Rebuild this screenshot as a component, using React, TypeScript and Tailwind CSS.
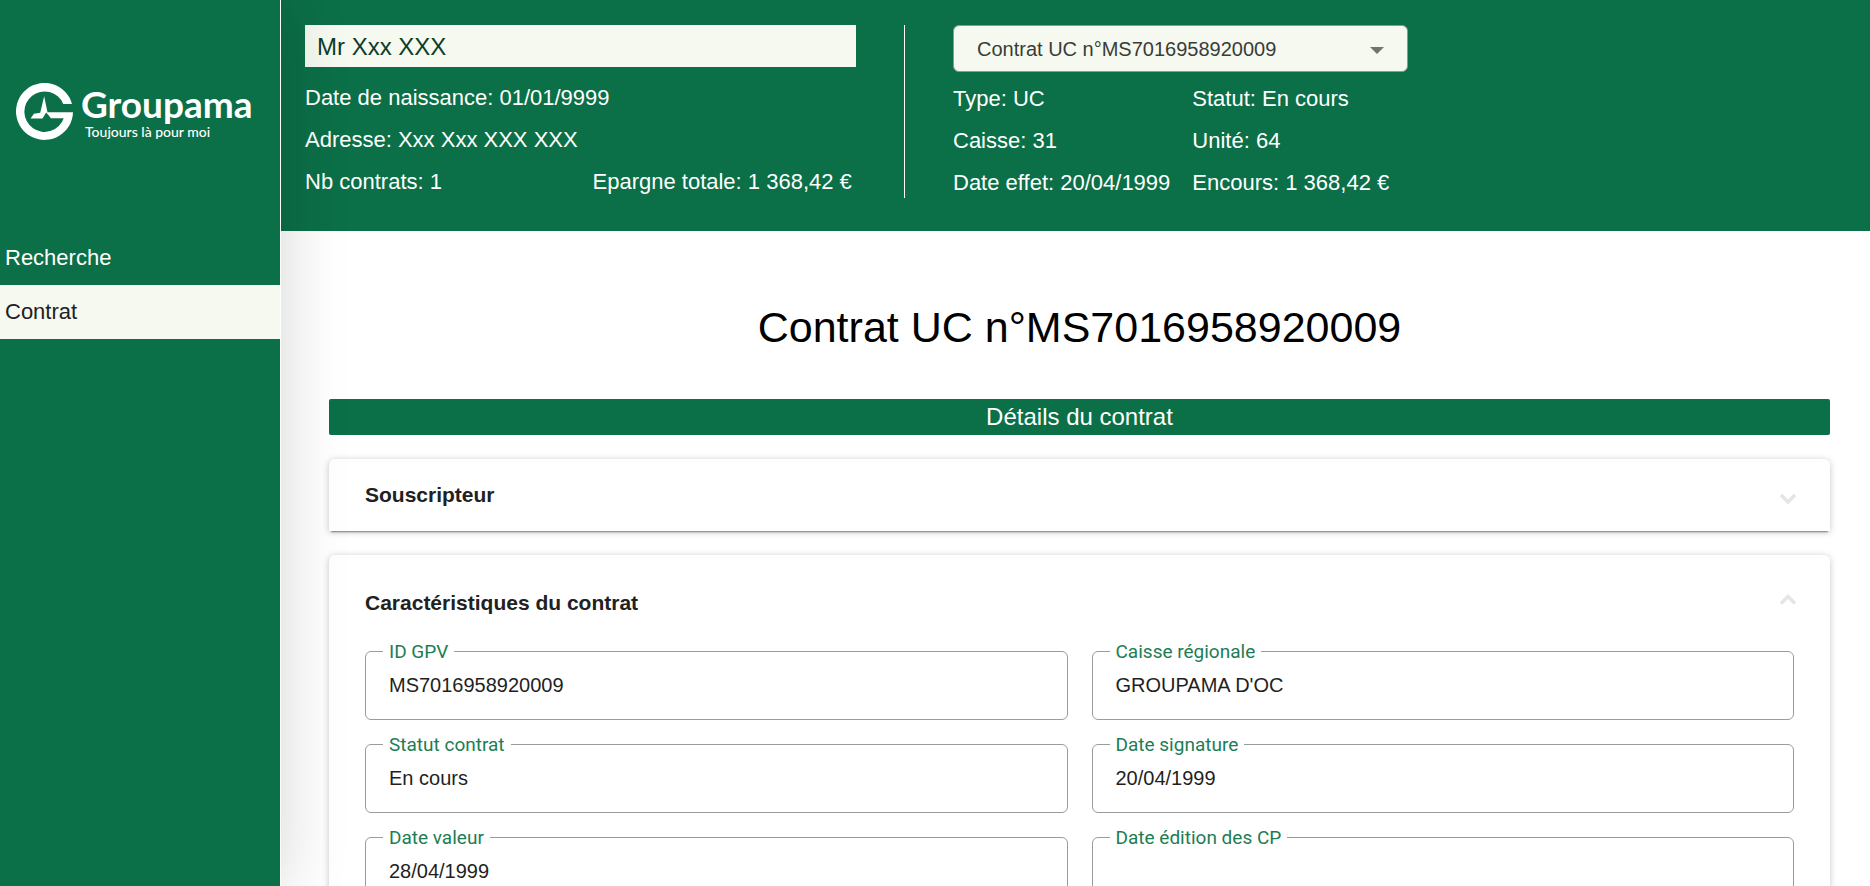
import { useId, useState } from "react";
import type { ReactNode } from "react";

type FieldData = { label: string; value: string };

const fields: FieldData[] = [
  { label: "ID GPV", value: "MS7016958920009" },
  { label: "Caisse régionale", value: "GROUPAMA D'OC" },
  { label: "Statut contrat", value: "En cours" },
  { label: "Date signature", value: "20/04/1999" },
  { label: "Date valeur", value: "28/04/1999" },
  { label: "Date édition des CP", value: "" },
];

function Logo() {
  return (
    <div className="flex h-[231px] items-center gap-2 pb-2 pl-4 text-white">
      <svg viewBox="12 12 172 172" className="h-[57px] w-[57px] shrink-0" fill="currentColor" aria-hidden="true">
        <path d="M181 75A86 86 0 1 0 184 100H106L117 118H156A61 61 0 1 1 154.5 75Z" />
        <path d="M97 52L107 100L118 118L103 101L92 119H56L66 105L85 102Z" />
      </svg>
      <div className="font-['Lato',sans-serif]">
        <div className="text-[37px] leading-10 font-bold">Groupama</div>
        <div className="pl-1 text-[14px] leading-4 font-medium">Toujours là pour moi</div>
      </div>
    </div>
  );
}

function Sidebar() {
  return (
    <aside className="relative z-10 w-[281px] shrink-0 border-r border-white bg-[#0b6f47] shadow-[0_0_60px_6px_rgba(0,0,0,0.14)]">
      <Logo />
      <nav className="flex flex-col text-[22px]">
        <a href="#recherche" className="flex h-[54px] items-center px-[5px] pb-0.5 text-white">
          Recherche
        </a>
        <a href="#contrat" aria-current="page" className="flex h-[54px] items-center bg-[#f6f9ef] px-[5px] pb-0.5 text-[#212121]">
          Contrat
        </a>
      </nav>
    </aside>
  );
}

function Header() {
  return (
    <header className="flex h-[231px] items-start bg-[#0b6f47] px-6 pt-[25px] text-[22px] leading-6 whitespace-nowrap text-white">
      <section className="w-full max-w-[551px]">
        <div className="bg-[#f6f9ef] px-3 pt-0.5 text-2xl leading-10 text-[#0b3d2e]">Mr Xxx XXX</div>
        <div className="mt-[19px] grid grid-cols-2 gap-x-6 gap-y-[18px]">
          <p className="col-span-2">Date de naissance: 01/01/9999</p>
          <p className="col-span-2">Adresse: Xxx Xxx XXX XXX</p>
          <p>Nb contrats: 1</p>
          <p>Epargne totale: 1 368,42 €</p>
        </div>
      </section>
      <div className="mx-12 h-[173px] w-px shrink-0 bg-white" />
      <section>
        <div className="relative w-[455px]">
          <select
            aria-label="Contrat"
            className="h-[47px] w-full appearance-none rounded-md border border-[#8d9a8d] bg-[#f6f9ef] px-[23px] text-xl text-[#3a3c39]"
          >
            <option>Contrat UC n°MS7016958920009</option>
          </select>
          <svg viewBox="0 0 14 7" className="pointer-events-none absolute top-[22px] right-6 h-[7px] w-[14px]" fill="#72746f" aria-hidden="true">
            <path d="M0 0H14L7 7Z" />
          </svg>
        </div>
        <div className="mt-[15px] grid grid-cols-[auto_auto] justify-start gap-x-[22px] gap-y-[18px]">
          <p>Type: UC</p>
          <p>Statut: En cours</p>
          <p>Caisse: 31</p>
          <p>Unité: 64</p>
          <p>Date effet: 20/04/1999</p>
          <p>Encours: 1 368,42 €</p>
        </div>
      </section>
    </header>
  );
}

function Chevron({ open }: { open: boolean }) {
  return (
    <svg viewBox="0 0 16 20" className="h-5 w-4" fill="none" stroke="#e4e5e9" strokeWidth="3.5" aria-hidden="true">
      <path d={open ? "M1 10.5L8 3.5L15 10.5" : "M1 10L8 17L15 10"} />
    </svg>
  );
}

function Panel({ title, initiallyOpen = false, children }: { title: string; initiallyOpen?: boolean; children?: ReactNode }) {
  const [open, setOpen] = useState(initiallyOpen);
  return (
    <section className="rounded-t-md bg-white shadow-[0_3px_2px_-2px_rgba(0,0,0,0.45),0_1px_7px_rgba(0,0,0,0.22)]">
      <h3>
        <button
          type="button"
          aria-expanded={open}
          onClick={() => setOpen(!open)}
          className={`flex w-full items-center justify-between pr-[34px] pl-9 text-[21px] font-bold text-[#212121] ${open ? "h-24" : "h-[72px]"}`}
        >
          {title}
          <Chevron open={open} />
        </button>
      </h3>
      {open && children}
    </section>
  );
}

function Field({ label, value }: FieldData) {
  const id = useId();
  return (
    <fieldset className="min-w-0 rounded-md border border-[#9b9b9b] px-[17px] pb-3">
      <legend className="px-[6px] pt-0.5 font-['Roboto',sans-serif] text-[19px] leading-[22px] text-[#1c7d54]">
        <label htmlFor={id}>{label}</label>
      </legend>
      <input id={id} defaultValue={value} readOnly className="block h-11 w-full bg-transparent px-[6px] text-xl text-[#1f1f1f] outline-none" />
    </fieldset>
  );
}

export default function App() {
  return (
    <div className="flex h-screen overflow-hidden bg-white font-['Liberation_Sans',Arial,sans-serif]">
      <Sidebar />
      <div className="min-w-0 flex-1 overflow-hidden">
        <Header />
        <main className="pt-16 pr-10 pb-10 pl-12">
          <h1 className="text-center text-[43px] leading-[64px] text-black">Contrat UC n°MS7016958920009</h1>
          <h2 className="mt-10 rounded-xs bg-[#0b6f47] text-center text-2xl leading-9 text-white">Détails du contrat</h2>
          <div className="mt-6 flex flex-col gap-6">
            <Panel title="Souscripteur">
              <p className="px-9 pb-6 text-xl">Mr Xxx XXX</p>
            </Panel>
            <Panel title="Caractéristiques du contrat" initiallyOpen>
              <div className="-mt-3 grid grid-cols-2 gap-x-6 gap-y-3 px-9 pb-9">
                {fields.map((field) => (
                  <Field key={field.label} {...field} />
                ))}
              </div>
            </Panel>
          </div>
        </main>
      </div>
    </div>
  );
}
